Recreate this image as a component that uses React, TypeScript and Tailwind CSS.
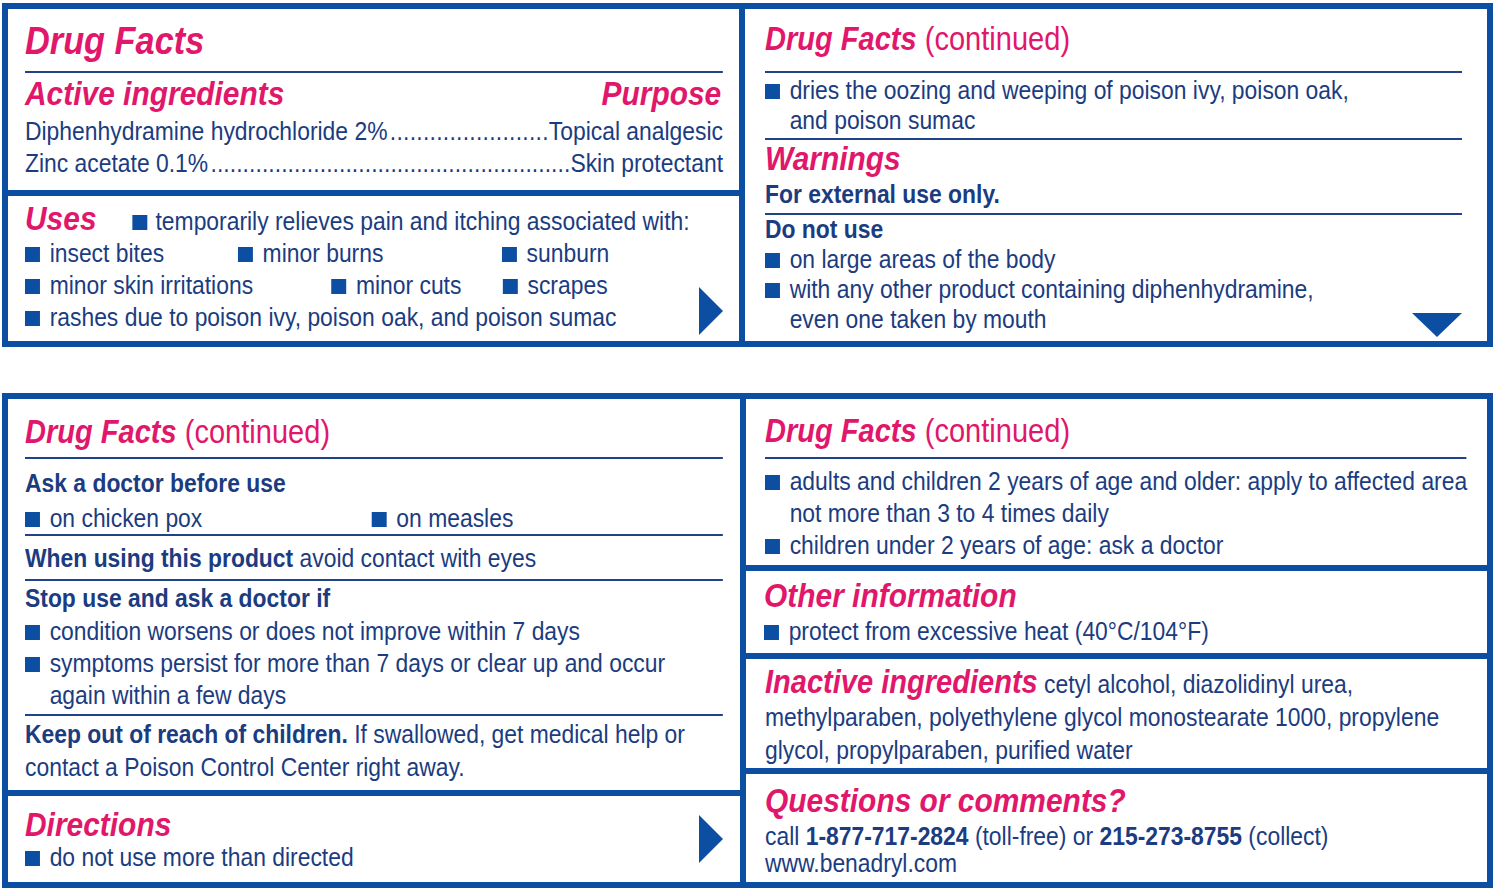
import React from 'react';

// Everything inside a column is squeezed horizontally to mimic the condensed label type.
const Narrow = ({ children, className = '' }: { children: React.ReactNode; className?: string }) => (
  <div className={`w-[113.64%] origin-left scale-x-[0.88] ${className}`}>{children}</div>
);

const Sq = ({ className = 'mr-[11px]' }: { className?: string }) => (
  <span className={`inline-block w-[17px] h-[15px] shrink-0 bg-[#0c4ea2] ${className}`} />
);

const Bullet = ({ children, className = '' }: { children: React.ReactNode; className?: string }) => (
  <div className={`flex items-baseline whitespace-nowrap ${className}`}>
    <Sq />
    <span>{children}</span>
  </div>
);

const Rule = ({ className = '' }: { className?: string }) => (
  <div className={`h-[2px] bg-[#1e4388] ${className}`} />
);

const Continued = () => (
  <div className="text-[33px] leading-[44px] text-[#e0176a] whitespace-nowrap">
    <span className="font-bold italic">Drug Facts</span> <span>(continued)</span>
  </div>
);

const ArrowRight = ({ className }: { className: string }) => (
  <svg className={className} width="24" height="48" viewBox="0 0 24 48">
    <polygon points="0,0 24,24 0,48" fill="#0c4ea2" />
  </svg>
);

const ArrowDown = ({ className }: { className: string }) => (
  <svg className={className} width="50" height="24" viewBox="0 0 50 24">
    <polygon points="0,0 50,0 25,24" fill="#0c4ea2" />
  </svg>
);

const Dots = ({ count, className = '' }: { count: number; className?: string }) => (
  <span className={`flex-1 text-right whitespace-nowrap ${className}`}>{'.'.repeat(count)}</span>
);

export default function App() {
  return (
    <div className="min-h-screen bg-white text-[#1b3c80] text-[26px] leading-[32px] [font-family:'Liberation_Sans',Arial,sans-serif]">
      {/* Top panel */}
      <div className="ml-[2px] mt-[3px] w-[1491px] h-[344px] border-[6px] border-[#0c4ea2] flex">
        {/* Left column */}
        <div className="w-[731px] shrink-0 flex flex-col">
          <div className="h-[181px] pl-[17px] pr-[16px] pt-[10px]">
            <Narrow>
              <div className="text-[39px] leading-[44px] font-bold italic text-[#e0176a]">Drug Facts</div>
              <Rule className="mt-[8px]" />
              <div className="mt-[2px] flex justify-between text-[34px] leading-[36px] font-bold italic text-[#e0176a]">
                <span>Active ingredients</span>
                <span className="pr-[2px]">Purpose</span>
              </div>
              <div className="mt-[4px]">
                <div className="flex">
                  <span>Diphenhydramine hydrochloride 2%</span>
                  <Dots count={24} className="tracking-[0.3px]" />
                  <span>Topical analgesic</span>
                </div>
                <div className="flex">
                  <span>Zinc acetate 0.1%</span>
                  <Dots count={56} className="tracking-[0.08px]" />
                  <span>Skin protectant</span>
                </div>
              </div>
            </Narrow>
          </div>
          <div className="h-[6px] bg-[#0c4ea2]" />
          <div className="relative flex-1 pl-[17px] pr-[16px] pt-[8px]">
            <Narrow>
              <div className="flex items-baseline whitespace-nowrap">
                <span className="text-[34px] leading-[28px] font-bold italic text-[#e0176a] mr-[41px]">Uses</span>
                <Sq className="mr-[9px]" />
                <span>temporarily relieves pain and itching associated with:</span>
              </div>
              <div className="flex">
                <Bullet className="w-[242px]">insect bites</Bullet>
                <Bullet className="w-[300px]">minor burns</Bullet>
                <Bullet>sunburn</Bullet>
              </div>
              <div className="flex">
                <Bullet className="w-[348px]">minor skin irritations</Bullet>
                <Bullet className="w-[195px]">minor cuts</Bullet>
                <Bullet>scrapes</Bullet>
              </div>
              <Bullet>rashes due to poison ivy, poison oak, and poison sumac</Bullet>
            </Narrow>
            <ArrowRight className="absolute right-[16px] bottom-[6px]" />
          </div>
        </div>
        <div className="w-[6px] shrink-0 bg-[#0c4ea2]" />
        {/* Right column */}
        <div className="relative flex-1 min-w-0 pl-[20px] pr-[25px] pt-[8px]">
          <Narrow>
            <Continued />
            <Rule className="mt-[10px]" />
            <div className="mt-[2px] leading-[30px]">
              <Bullet>
                dries the oozing and weeping of poison ivy, poison oak,
                <br />
                and poison sumac
              </Bullet>
            </div>
            <Rule className="mt-[3px]" />
            <div className="text-[34px] leading-[36px] font-bold italic text-[#e0176a]">Warnings</div>
            <div className="mt-[3px] leading-[30px] font-bold">For external use only.</div>
            <Rule className="mt-[4px]" />
            <div className="mt-[1px] leading-[26px] font-bold">Do not use</div>
            <div className="mt-[2px] leading-[30px]">
              <Bullet>on large areas of the body</Bullet>
              <Bullet>
                with any other product containing diphenhydramine,
                <br />
                even one taken by mouth
              </Bullet>
            </div>
          </Narrow>
          <ArrowDown className="absolute right-[25px] bottom-[4px]" />
        </div>
      </div>

      {/* Bottom panel */}
      <div className="ml-[2px] mt-[46px] w-[1491px] h-[495px] border-[6px] border-[#0c4ea2] flex">
        {/* Left column */}
        <div className="w-[732px] shrink-0 flex flex-col">
          <div className="h-[391px] pl-[17px] pr-[17px] pt-[11px]">
            <Narrow>
              <Continued />
              <Rule className="mt-[3px]" />
              <div className="mt-[9px] leading-[30px] font-bold">Ask a doctor before use</div>
              <div className="mt-[5px] leading-[30px] flex">
                <Bullet className="w-[394px]">on chicken pox</Bullet>
                <Bullet>on measles</Bullet>
              </div>
              <Rule className="mt-[1px]" />
              <div className="mt-[7px] leading-[30px]">
                <span className="font-bold">When using this product</span> avoid contact with eyes
              </div>
              <Rule className="mt-[6px]" />
              <div className="mt-[2px] leading-[30px] font-bold">Stop use and ask a doctor if</div>
              <div className="mt-[2px]">
                <Bullet>condition worsens or does not improve within 7 days</Bullet>
                <Bullet>
                  symptoms persist for more than 7 days or clear up and occur
                  <br />
                  again within a few days
                </Bullet>
              </div>
              <Rule className="mt-[3px]" />
              <div className="mt-[2px] leading-[33px] whitespace-nowrap">
                <span className="font-bold">Keep out of reach of children.</span> If swallowed, get medical help or
                <br />
                contact a Poison Control Center right away.
              </div>
            </Narrow>
          </div>
          <div className="h-[6px] bg-[#0c4ea2]" />
          <div className="relative flex-1 pl-[17px] pr-[17px] pt-[11px]">
            <Narrow>
              <div className="text-[34px] leading-[34px] font-bold italic text-[#e0176a]">Directions</div>
              <div className="mt-[1px] leading-[30px]">
                <Bullet>do not use more than directed</Bullet>
              </div>
            </Narrow>
            <ArrowRight className="absolute right-[17px] bottom-[19px]" />
          </div>
        </div>
        <div className="w-[6px] shrink-0 bg-[#0c4ea2]" />
        {/* Right column */}
        <div className="flex-1 min-w-0 flex flex-col">
          <div className="h-[166px] pl-[19px] pr-[21px] pt-[10px]">
            <Narrow>
              <Continued />
              <Rule className="mt-[4px]" />
              <div className="mt-[6px]">
                <Bullet>
                  adults and children 2 years of age and older: apply to affected area
                  <br />
                  not more than 3 to 4 times daily
                </Bullet>
                <Bullet>children under 2 years of age: ask a doctor</Bullet>
              </div>
            </Narrow>
          </div>
          <div className="h-[6px] bg-[#0c4ea2]" />
          <div className="h-[82px] pl-[18px] pr-[21px] pt-[6px]">
            <Narrow>
              <div className="text-[34px] leading-[36px] font-bold italic text-[#e0176a]">Other information</div>
              <div className="mt-[3px] leading-[30px]">
                <Bullet>protect from excessive heat (40°C/104°F)</Bullet>
              </div>
            </Narrow>
          </div>
          <div className="h-[6px] bg-[#0c4ea2]" />
          <div className="h-[109px] pl-[19px] pr-[21px] pt-[9px] leading-[33px] whitespace-nowrap">
            <Narrow>
              <div>
                <span className="text-[33px] leading-[28px] font-bold italic text-[#e0176a]">Inactive ingredients</span> cetyl
                alcohol, diazolidinyl urea,
              </div>
              <div>methylparaben, polyethylene glycol monostearate 1000, propylene</div>
              <div>glycol, propylparaben, purified water</div>
            </Narrow>
          </div>
          <div className="h-[6px] bg-[#0c4ea2]" />
          <div className="flex-1 pl-[19px] pr-[21px] pt-[7px] whitespace-nowrap">
            <Narrow>
              <div className="text-[34px] leading-[38px] font-bold italic text-[#e0176a]">Questions or comments?</div>
              <div className="mt-[3px] leading-[28px]">
                call <span className="font-bold">1-877-717-2824</span> (toll-free) or{' '}
                <span className="font-bold">215-273-8755</span> (collect)
              </div>
              <div className="leading-[26px]">www.benadryl.com</div>
            </Narrow>
          </div>
        </div>
      </div>
    </div>
  );
}
